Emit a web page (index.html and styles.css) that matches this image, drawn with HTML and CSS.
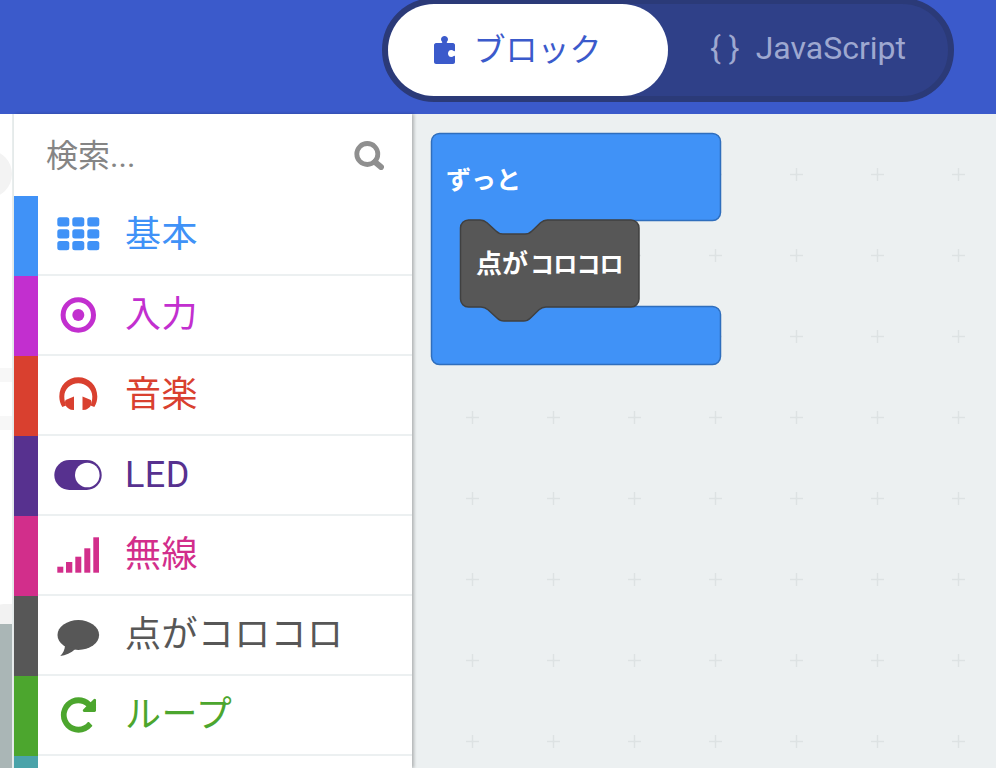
FILE: index.html
```html
<!DOCTYPE html>
<html lang="ja">
<head>
    <meta charset="UTF-8">
    <meta name="viewport" content="width=device-width, initial-scale=1.0">
    <title>MakeCode Editor</title>
    <link rel="stylesheet" href="styles.css">
</head>
<body>
    <header class="topbar">
        <div class="mode-switch">
            <a class="mode-tab active" href="#blocks">
                <svg class="tab-icon" width="24" height="30" viewBox="0 0 24 30">
                    <path d="M3 8h5.500c.8 0 1-.6.6-1.200C8.500 6 8 5.200 8 4.200 8 2.300 9.600 1 11.500 1S15 2.300 15 4.200c0 1-.5 1.800-1.100 2.600-.4.600-.2 1.200.6 1.200H20c1 0 2 1 2 2v5.500c0 .8-.6 1-1.200.6-.8-.6-1.600-1.100-2.600-1.100-1.900 0-3.200 1.600-3.200 3.500s1.300 3.500 3.200 3.500c1 0 1.800-.5 2.600-1.100.6-.4 1.200-.2 1.200.6V27c0 1-1 2-2 2H3c-1 0-2-1-2-2V10c0-1 1-2 2-2z"/>
                </svg>
                <span class="tab-text">ブロック</span>
            </a>
            <a class="mode-tab" href="#javascript">
                <span class="tab-text">{ }</span>
                <span class="tab-text">JavaScript</span>
            </a>
        </div>
    </header>

    <main class="editor">
        <div class="simulator">
            <span class="sim-shape sim-round"></span>
            <span class="sim-shape sim-band-a"></span>
            <span class="sim-shape sim-band-b"></span>
            <span class="sim-shape sim-glow"></span>
            <span class="sim-shape sim-body"></span>
        </div>

        <aside class="toolbox">
            <div class="search">
                <span>検索...</span>
                <svg width="30" height="34" viewBox="0 0 30 34">
                    <circle cx="13.300" cy="18" r="10.500" fill="none" stroke="#8f8f8f" stroke-width="4.800"/>
                    <path d="M21 26l6 5" stroke="#8f8f8f" stroke-width="6" stroke-linecap="round"/>
                </svg>
            </div>

            <div class="category basic">
                <span class="bar"></span>
                <svg class="cat-icon" viewBox="0 0 48 48">
                    <rect x="3.300" y="8.300" width="12" height="9.300" rx="2.500"/>
                    <rect x="18.300" y="8.300" width="12" height="9.300" rx="2.500"/>
                    <rect x="33.300" y="8.300" width="12" height="9.300" rx="2.500"/>
                    <rect x="3.300" y="20.300" width="12" height="9.300" rx="2.500"/>
                    <rect x="18.300" y="20.300" width="12" height="9.300" rx="2.500"/>
                    <rect x="33.300" y="20.300" width="12" height="9.300" rx="2.500"/>
                    <rect x="3.300" y="32" width="12" height="9.300" rx="2.500"/>
                    <rect x="18.300" y="32" width="12" height="9.300" rx="2.500"/>
                    <rect x="33.300" y="32" width="12" height="9.300" rx="2.500"/>
                </svg>
                <span class="label">基本</span>
            </div>

            <div class="category input">
                <span class="bar"></span>
                <svg class="cat-icon" viewBox="0 0 48 48">
                    <circle cx="24.300" cy="26" r="15.200" fill="none" stroke="currentColor" stroke-width="5"/>
                    <circle cx="24.300" cy="26" r="6"/>
                </svg>
                <span class="label">入力</span>
            </div>

            <div class="category music">
                <span class="bar"></span>
                <svg class="cat-icon" viewBox="0 0 48 48">
                    <path d="M5.300 27.500C5.300 16.500 13.500 8.300 24.300 8.300s19 8.200 19 19.200c0 4-1 7-3 10.500l-3.800-1.500c1.300-3 1.800-6 1.800-9 0-7.500-6.500-13.200-14-13.200s-14 5.700-14 13.200c0 3 .5 6 1.800 9L8.300 38c-2-3.500-3-6.500-3-10.500z"/>
                    <path d="M20 27.500V41l-3-.3c-3.500-1-6-4-6-7.200 0-1 .2-1.700.6-2.500z"/>
                    <path d="M28.500 27.500V41l3-.3c3.500-1 6-4 6-7.200 0-1-.2-1.700-.6-2.500z"/>
                </svg>
                <span class="label">音楽</span>
            </div>

            <div class="category led">
                <span class="bar"></span>
                <svg class="cat-icon" viewBox="0 0 48 48">
                    <rect x="0.300" y="11" width="47.400" height="30" rx="15"/>
                    <circle cx="33.300" cy="26" r="12.300" fill="#fff"/>
                </svg>
                <span class="label">LED</span>
            </div>

            <div class="category radio">
                <span class="bar"></span>
                <svg class="cat-icon" viewBox="0 0 48 48">
                    <rect x="3.300" y="37.700" width="6" height="6"/>
                    <rect x="12" y="33" width="6.300" height="10.700"/>
                    <rect x="21.300" y="27.700" width="6" height="16"/>
                    <rect x="30.300" y="19.300" width="6" height="24.400"/>
                    <rect x="39.300" y="8.300" width="5.700" height="35.400"/>
                </svg>
                <span class="label">無線</span>
            </div>

            <div class="category dots">
                <span class="bar"></span>
                <svg class="cat-icon" viewBox="0 0 48 48">
                    <ellipse cx="24.300" cy="26" rx="20.800" ry="15"/>
                    <path d="M11 36c0 4.500-2 8.500-4.700 11 5-.5 11-3 15-7z"/>
                </svg>
                <span class="label">点がコロコロ</span>
            </div>

            <div class="category loops">
                <span class="bar"></span>
                <svg class="cat-icon" viewBox="0 0 48 48">
                    <path transform="translate(6.700 8.300) scale(.023) translate(-128 -128)" d="M1664 256v448q0 26-19 45t-45 19h-448q-42 0-59-40-17-39 14-69l138-138q-148-137-349-137-104 0-198.500 40.500t-163.500 109.500-109.500 163.500-40.500 198.500 40.500 198.500 109.500 163.500 163.500 109.500 198.500 40.500q119 0 225-52t179-147q7-10 26-12 17 0 29 10l137 138q9 8 9.500 20.500t-7.500 22.500q-109 132-264 204.500t-327 72.500q-156 0-298-61t-245-164-164-245-61-298 61-298 164-245 245-164 298-61q147 0 284.500 55.500t244.500 156.500l130-129q29-31 70-14 39 17 39 59z"/>
                </svg>
                <span class="label">ループ</span>
            </div>

            <div class="category logic">
                <span class="bar"></span>
            </div>
        </aside>

        <svg class="workspace" viewBox="412 114 584 654">
            <defs>
                <pattern id="grid" x="432" y="134" width="81" height="81" patternUnits="userSpaceOnUse">
                    <path d="M34 40.500H47M40.500 34V47" stroke="#dde2e3" stroke-width="1.500" fill="none"/>
                </pattern>
            </defs>
            <rect x="412" y="114" width="584" height="654" fill="url(#grid)"/>

            <!-- forever block, the notch of its arm shows above the inner block -->
            <path class="block-forever" d="M439.500 133.500H712.500a8 8 0 0 1 8 8V212.500a8 8 0 0 1-8 8H545L528 235H500L483 220.500H470V306.500H712.500a8 8 0 0 1 8 8V356.500a8 8 0 0 1-8 8H439.500a8 8 0 0 1-8-8V141.500a8 8 0 0 1 8-8z"/>
            <text class="block-text" x="446" y="189">ずっと</text>

            <!-- dots block inside -->
            <path class="block-dots" d="M468.500 220H480c3 0 5 1 7 2.800l9 8.200c2 2 4 3 7 3h22c3 0 5-1 7-3l8.500-8.200c2-1.800 4-2.800 7-2.800H631a8 8 0 0 1 8 8V299a8 8 0 0 1-8 8H546c-3 0-5 1-7 2.800l-8.500 8.200c-2 2-4 3-7 3H504c-3 0-5-1-7-3l-9-8.200c-2-1.800-4-2.800-7-2.800H468.500a8 8 0 0 1-8-8V228a8 8 0 0 1 8-8z"/>
            <text class="block-text dots-text" y="273"><tspan x="476" class="dots-wide">点が</tspan><tspan x="530" class="dots-tight">コロコロ</tspan></text>
        </svg>
    </main>
</body>
</html>
```

FILE: styles.css
```css
html, body {
    height: 100%;
}

body {
    margin: 0;
    display: flex;
    flex-direction: column;
    overflow: hidden;
    font-family: Roboto, "Noto Sans CJK JP", sans-serif;
    background-color: #ffffff;
}

.topbar {
    height: 114px;
    flex: none;
    display: flex;
    justify-content: flex-end;
    align-items: flex-start;
    padding-right: 42px;
    background-color: #3b5acb;
}

.mode-switch {
    display: flex;
    width: 572px;
    height: 104px;
    margin-top: -2px;
    box-sizing: border-box;
    border: 6px solid #2b3a78;
    border-radius: 52px;
    background-color: #2f4088;
}

.mode-tab {
    display: flex;
    align-items: center;
    justify-content: center;
    flex: 1;
    gap: 16px;
    font-size: 32px;
    color: #9ea8d0;
    text-decoration: none;
}

.tab-text {
    margin-bottom: 4px;
}

.mode-tab.active {
    flex: none;
    width: 280px;
    height: 92px;
    gap: 16px;
    padding-right: 21px;
    box-sizing: border-box;
    border-radius: 46px;
    color: #3b5acb;
    background-color: #ffffff;
}

.active .tab-text {
    margin-bottom: 6px;
}

.tab-icon {
    fill: #3b5acb;
}

.editor {
    flex: 1;
    min-height: 0;
    display: flex;
}

.simulator {
    position: relative;
    flex: none;
    width: 12px;
    overflow: hidden;
    border-right: 2px solid #e8eded;
}

.sim-shape {
    position: absolute;
    display: block;
}

.sim-round {
    left: -36px;
    top: 36px;
    width: 48px;
    height: 48px;
    border-radius: 50%;
    background-color: #f3f3f3;
}

.sim-band-a,
.sim-band-b {
    left: 0;
    width: 12px;
    height: 14px;
    background-color: #f7f7f7;
}

.sim-band-a {
    top: 254px;
}

.sim-band-b {
    top: 302px;
}

.sim-glow {
    left: -10px;
    top: 490px;
    width: 40px;
    height: 60px;
    border-radius: 14px;
    background-color: #f2f2f2;
}

.sim-body {
    left: -100px;
    top: 510px;
    width: 212px;
    height: 200px;
    border-radius: 106px 106px 0 0 / 14px 14px 0 0;
    background-color: #aab6b6;
}

.toolbox {
    position: relative;
    z-index: 1;
    flex: none;
    width: 398px;
    overflow: hidden;
    background-color: #ffffff;
    box-shadow: 2px 0 3px rgba(0, 0, 0, 0.25);
}

.search {
    height: 82px;
    display: flex;
    align-items: center;
    justify-content: space-between;
    padding: 0 28px 4px 32px;
    box-sizing: border-box;
    font-size: 32px;
    color: #858585;
}

.category {
    height: 80px;
    display: flex;
    align-items: center;
    box-sizing: border-box;
    border-bottom: 2px solid #ecf0f1;
    font-size: 36px;
}

.bar {
    flex: none;
    align-self: stretch;
    width: 24px;
    margin-bottom: -2px;
    background-color: currentColor;
}

.cat-icon {
    flex: none;
    width: 48px;
    height: 48px;
    margin: 0 23px 4px 16px;
    fill: currentColor;
}

.label {
    line-height: 1;
    letter-spacing: 0.4px;
}

.basic { color: #4092f7; }
.input { color: #c22fcf; }
.music { color: #d9402f; }
.led { color: #57318f; }
.radio { color: #d22e8b; }
.dots { color: #575757; }
.loops { color: #4ca62e; }
.logic { color: #4aa3a9; }

.workspace {
    flex: 1;
    min-width: 0;
    height: 100%;
    display: block;
    background-color: #ecf0f1;
}

.block-forever {
    fill: #4092f7;
    stroke: #2f6ebd;
    stroke-width: 1.5;
    stroke-linejoin: round;
}

.block-dots {
    fill: #575757;
    stroke: #404040;
    stroke-width: 1.5;
}

.block-text {
    font-size: 25px;
    font-weight: 700;
    fill: #ffffff;
}

.dots-text {
    font-size: 24px;
}

.dots-wide {
    font-size: 26px;
}

.dots-tight {
    letter-spacing: -0.8px;
}
```
